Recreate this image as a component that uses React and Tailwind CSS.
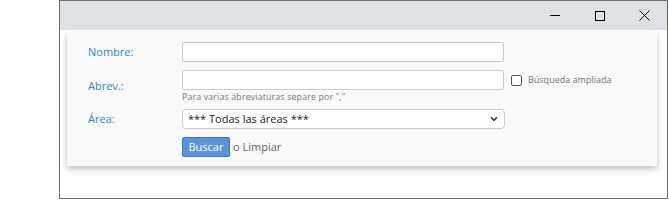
import { ChevronDown } from 'lucide-react';

const font = { fontFamily: '"Open Sans", "Noto Sans", sans-serif' };

function Row({ label, children, className = '' }) {
  return (
    <div className={`flex items-center ${className}`}>
      <div className="w-[94px] shrink-0 text-[11px] text-[#2b8bc6]">{label}</div>
      <div className="flex-1">{children}</div>
    </div>
  );
}

export default function App() {
  return (
    <div className="w-[669px] h-[200px] bg-white" style={font}>
      <div className="ml-[59px] w-[609px] h-[199px] border border-[#6e6e6e] flex flex-col">
        <div className="h-[29px] bg-[#dee1e6] flex items-center justify-end shrink-0">
          <div className="w-[45px] h-[29px] flex items-center justify-center">
            <div className="w-[10px] h-px bg-black" />
          </div>
          <div className="w-[45px] h-[29px] flex items-center justify-center">
            <div className="w-[10px] h-[10px] border border-black" />
          </div>
          <div className="w-[45px] h-[29px] flex items-center justify-center">
            <svg width="11" height="11" viewBox="0 0 11 11">
              <path d="M0.5 0.5 L10.5 10.5 M10.5 0.5 L0.5 10.5" stroke="#000" strokeWidth="1" />
            </svg>
          </div>
        </div>
        <div className="flex-1 bg-white pt-[2px]">
          <div className="ml-[7px] w-[590px] h-[134px] bg-[#f9f9f9] shadow-[0_3px_6px_rgba(0,0,0,0.25)] pl-[21px] pt-[10px]">
            <Row label="Nombre:">
              <input className="block w-[322px] h-[20px] bg-white border border-[#cccccc] rounded-[2px] outline-none" />
            </Row>
            <Row label="Abrev.:" className="mt-[8px]">
              <div className="flex items-center">
                <input className="block w-[322px] h-[20px] bg-white border border-[#cccccc] rounded-[2px] outline-none" />
                <div className="ml-[7px] w-[11px] h-[11px] border border-[#555] rounded-[2px] bg-white" />
                <span className="ml-[6px] text-[9px] text-[#777]">Búsqueda ampliada</span>
              </div>
              <div className="text-[8.75px] tracking-[0.18px] text-[#777] leading-[12px] mt-[1px]">
                Para varias abreviaturas separe por ","
              </div>
            </Row>
            <Row label="Área:" className="mt-[6px]">
              <div className="w-[323px] h-[20px] bg-white border border-[#cccccc] rounded-[4px] flex items-center justify-between pl-[5px] pr-[5px]">
                <span className="text-[11px] text-[#222]">*** Todas las áreas ***</span>
                <ChevronDown className="w-[10px] h-[10px] text-[#333]" strokeWidth={4} />
              </div>
            </Row>
            <div className="flex items-center ml-[94px] mt-[8px]">
              <div className="h-[20px] w-[48px] bg-[#5b93d9] border border-[#3b78c8] rounded-[2px] flex items-center justify-center text-white text-[11px]">
                Buscar
              </div>
              <span className="ml-[3px] text-[11px] text-[#666]">o Limpiar</span>
            </div>
          </div>
        </div>
      </div>
    </div>
  );
}
